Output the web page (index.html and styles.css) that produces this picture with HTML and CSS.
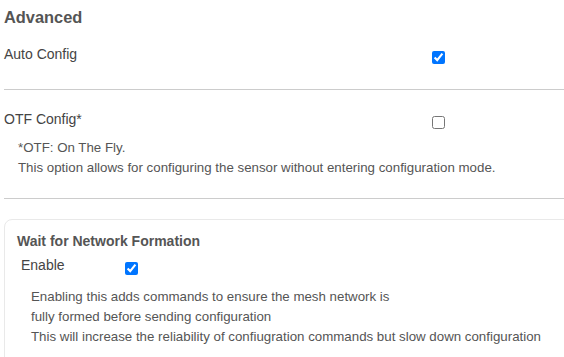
FILE: index.html
```html
<!DOCTYPE html>
<html lang="en">

<head>
  <meta charset="UTF-8" />
  <meta name="viewport" content="width=device-width, initial-scale=1.0" />
  <title>Advanced</title>
  <link rel="stylesheet" href="styles.css">
</head>

<body>
  <div class="page">
    <h3 class="section-title">Advanced</h3>

    <div class="setting">
      <div class="row">
        <label class="label" for="autoConfig">Auto Config</label>
        <input type="checkbox" id="autoConfig" checked />
      </div>
    </div>

    <div class="setting">
      <div class="row">
        <label class="label" for="otfConfig">OTF Config*</label>
        <input type="checkbox" id="otfConfig" />
      </div>
      <div class="desc">
        <p>*OTF: On The Fly.</p>
        <p>This option allows for configuring the sensor without entering configuration mode.</p>
      </div>
    </div>

    <div class="card">
      <h4 class="card-title">Wait for Network Formation</h4>
      <div class="row row-small">
        <label class="label" for="waitNetwork">Enable</label>
        <input type="checkbox" id="waitNetwork" checked />
      </div>
      <div class="desc desc-card">
        <p>Enabling this adds commands to ensure the mesh network is</p>
        <p>fully formed before sending configuration</p>
        <p>This will increase the reliability of confiugration commands but slow down configuration</p>
      </div>
    </div>
  </div>
</body>

</html>
```

FILE: styles.css
```css
* {
  margin: 0;
  padding: 0;
  box-sizing: border-box;
  font-family: 'Liberation Sans', Arial, sans-serif;
}

body {
  background: #fff;
  overflow: hidden;
}

.page {
  width: 640px;
  padding-left: 4px;
}

.section-title {
  font-size: 16.4px;
  line-height: 19px;
  font-weight: bold;
  color: #555;
  margin-top: 8px;
}

.setting {
  border-bottom: 1px solid #ccc;
  padding-bottom: 25px;
  margin-top: 19px;
}

.setting + .setting {
  margin-top: 21px;
  padding-bottom: 20px;
}

.row {
  display: flex;
  align-items: flex-start;
}

.label {
  flex: 0 0 428px;
  font-size: 14px;
  line-height: 16px;
  color: #444;
}

.row input[type="checkbox"] {
  width: 13px;
  height: 13px;
  margin: 5px 0 0 0;
}

.desc {
  margin-top: 9px;
  padding-left: 14px;
}

.desc p {
  font-size: 13.3px;
  line-height: 20px;
  color: #555;
}

.card {
  margin-top: 20px;
  border: 1px solid #e9e9e9;
  border-radius: 8px;
  padding: 11px 12px 20px;
}

.card-title {
  font-size: 14px;
  line-height: 20px;
  font-weight: bold;
  color: #555;
}

.row-small {
  margin-top: 6px;
  padding-left: 4px;
}

.row-small .label {
  flex-basis: 104px;
}

.desc-card {
  margin-top: 12px;
}
```
